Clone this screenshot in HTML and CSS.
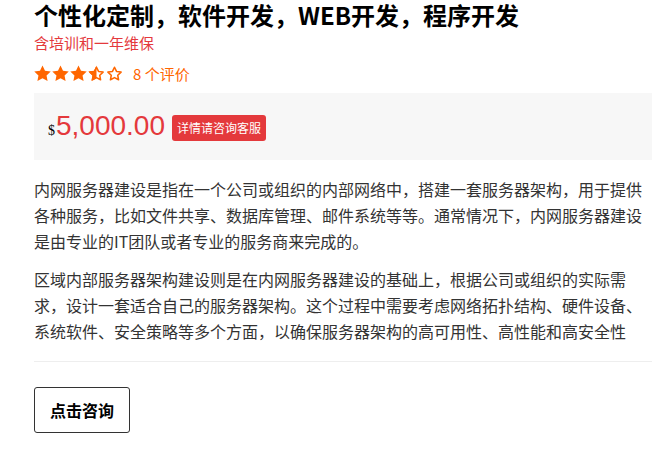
FILE: index.html
```html
<!DOCTYPE html>
<html lang="zh-CN">
<head>
<meta charset="utf-8">
<title>个性化定制</title>
<link rel="stylesheet" href="styles.css">
</head>
<body>
<div class="wrap">
  <h1 class="title">个性化定制，软件开发，WEB开发，程序开发</h1>
  <div class="subtitle">含培训和一年维保</div>
  <div class="rating">
    <div class="stars">
      <svg class="star" viewBox="0 0 24 24"><path class="full" d="M12 0.6L15.53 7.95 23.6 9.03 17.71 14.65 19.17 22.67 12 18.8 4.83 22.67 6.29 14.65 0.4 9.03 8.47 7.95Z"/></svg>
      <svg class="star" viewBox="0 0 24 24"><path class="full" d="M12 0.6L15.53 7.95 23.6 9.03 17.71 14.65 19.17 22.67 12 18.8 4.83 22.67 6.29 14.65 0.4 9.03 8.47 7.95Z"/></svg>
      <svg class="star" viewBox="0 0 24 24"><path class="full" d="M12 0.6L15.53 7.95 23.6 9.03 17.71 14.65 19.17 22.67 12 18.8 4.83 22.67 6.29 14.65 0.4 9.03 8.47 7.95Z"/></svg>
      <svg class="star" viewBox="0 0 24 24"><defs><clipPath id="half"><rect x="0" y="0" width="12" height="24"/></clipPath></defs><path class="full" clip-path="url(#half)" d="M12 0.6L15.53 7.95 23.6 9.03 17.71 14.65 19.17 22.67 12 18.8 4.83 22.67 6.29 14.65 0.4 9.03 8.47 7.95Z"/><path class="empty" d="M12 3.2L14.85 9.1 21.3 10 16.6 14.5 17.75 20.9 12 17.8 6.25 20.9 7.4 14.5 2.7 10 9.15 9.1Z"/></svg>
      <svg class="star" viewBox="0 0 24 24"><path class="empty" d="M12 3.2L14.85 9.1 21.3 10 16.6 14.5 17.75 20.9 12 17.8 6.25 20.9 7.4 14.5 2.7 10 9.15 9.1Z"/></svg>
    </div>
    <span class="count">8 个评价</span>
  </div>
  <div class="price-box">
    <span class="price"><span class="currency">$</span><span class="amount">5,000.00</span></span>
    <span class="badge">详情请咨询客服</span>
  </div>
  <div class="desc">
    <p>内网服务器建设是指在一个公司或组织的内部网络中，搭建一套服务器架构，用于提供各种服务，比如文件共享、数据库管理、邮件系统等等。通常情况下，内网服务器建设是由专业的IT团队或者专业的服务商来完成的。</p>
    <p>区域内部服务器架构建设则是在内网服务器建设的基础上，根据公司或组织的实际需求，设计一套适合自己的服务器架构。这个过程中需要考虑网络拓扑结构、硬件设备、系统软件、安全策略等多个方面，以确保服务器架构的高可用性、高性能和高安全性</p>
  </div>
  <div class="actions">
    <button class="btn">点击咨询</button>
  </div>
</div>
</body>
</html>
```
FILE: styles.css
```css
html, body {
  margin: 0;
  padding: 0;
  background: #fff;
}
body {
  font-family: "Noto Sans CJK SC", "Noto Sans", sans-serif;
  color: #333;
}
.wrap {
  padding: 0 10px 0 34px;
}
.title {
  margin: 0;
  font-size: 24px;
  line-height: 30px;
  font-weight: 700;
  color: #000;
}
.subtitle {
  margin-top: 3px;
  font-size: 15px;
  line-height: 20px;
  color: #e4393c;
}
.rating {
  margin-top: 10px;
  display: flex;
  align-items: center;
  height: 21px;
}
.stars {
  display: flex;
  gap: 1px;
}
.star {
  width: 17px;
  height: 17px;
  display: block;
  overflow: visible;
}
.star .full {
  fill: #ff6600;
}
.star .empty {
  fill: none;
  stroke: #ff6600;
  stroke-width: 2.2;
  stroke-linejoin: round;
}
.count {
  margin-left: 10px;
  font-size: 15px;
  line-height: 20px;
  color: #ff6600;
}
.price-box {
  margin-top: 9px;
  background: #f7f7f7;
  padding: 18px 14px 15px;
  display: flex;
  align-items: center;
  height: 34px;
}
.price {
  line-height: 34px;
  white-space: nowrap;
}
.currency {
  font-family: "Liberation Serif", serif;
  font-size: 14px;
  color: #000;
}
.amount {
  font-family: "Liberation Sans", Arial, sans-serif;
  font-size: 28px;
  color: #e4393c;
  margin-left: 1px;
}
.badge {
  margin-left: 7px;
  background: #e4393c;
  color: #fff;
  font-size: 12px;
  line-height: 18px;
  padding: 4px 5px;
  border-radius: 3px;
  white-space: nowrap;
}
.desc {
  padding-top: 16px;
  padding-bottom: 17px;
  border-bottom: 1px solid #eee;
}
.desc p {
  margin: 0;
  font-size: 16px;
  line-height: 26px;
  color: #333;
}
.desc p + p {
  margin-top: 12px;
}
.actions {
  padding-top: 25px;
}
.btn {
  font-family: "Noto Sans CJK SC", "Noto Sans", sans-serif;
  font-size: 16px;
  font-weight: 700;
  line-height: 22px;
  color: #000;
  background: #fff;
  border: 1px solid #333;
  border-radius: 3px;
  padding: 11px 15px;
  cursor: pointer;
}
```
